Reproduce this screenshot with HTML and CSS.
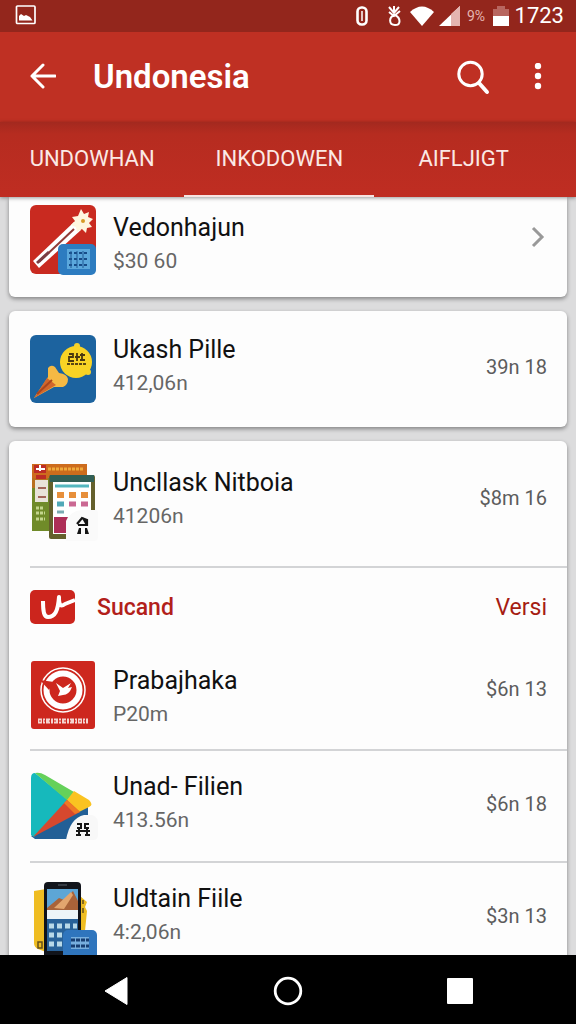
FILE: index.html
```html
<!DOCTYPE html>
<html lang="id">
<head>
  <meta charset="UTF-8" />
  <meta name="viewport" content="width=device-width, initial-scale=1" />
  <title>Undonesia</title>
  <link rel="stylesheet" href="styles.css">
</head>
<body>
  <!-- Status bar -->
  <div class="statusbar">
    <svg width="22" height="20" viewBox="0 0 22 20">
      <rect x="1.5" y="1" width="18.5" height="17.5" rx="1" fill="none" stroke="#fff" stroke-width="1.7"/>
      <path d="M4 15.5V11l2-2 3 2 2-1 4 2 2.5 3.500z" fill="#fff"/>
    </svg>
    <div class="status-right">
      <svg width="160" height="26" viewBox="0 0 160 26">
        <rect x="2.500" y="5.500" width="9" height="17" rx="4" fill="none" stroke="#fff" stroke-width="2.600"/>
        <path d="M7 9v10" stroke="#fff" stroke-width="1.500"/>
        <path d="M34 5l5 6 5-6M34 10l5 4 6-5M39 4v9M40 13c-7 2-6 10 0 10s6-7 0-10" fill="none" stroke="#fff" stroke-width="2"/>
        <path d="M55 10Q67-1 79 10L67 24z" fill="#fff"/>
        <path d="M84 24L105 4v20z" fill="#fff"/>
        <path d="M96 12l9-8v20h-9z" fill="#e4b5b0"/>
        <text x="112" y="19" class="percent">9%</text>
        <path d="M138 7h4V4h8v3h4v7h-16z" fill="#b8665f"/>
        <path d="M138 14h16v10h-16z" fill="#fff"/>
      </svg>
      <span class="clock">1723</span>
    </div>
  </div>

  <header class="appbar">
    <button class="icon-btn back" aria-label="Back">
      <svg width="28" height="28" viewBox="0 0 28 28" fill="none" stroke="#fff" stroke-width="3" stroke-linecap="round" stroke-linejoin="round">
        <path d="M27 13H4M15 2L4 13l11 11"/>
      </svg>
    </button>
    <h1>Undonesia</h1>
    <button class="icon-btn" aria-label="Search">
      <svg width="34" height="36" viewBox="0 0 34 36" fill="none" stroke="#fff" stroke-linecap="round">
        <circle cx="14.500" cy="15" r="11.700" stroke-width="3"/>
        <path d="M23 24l8 9" stroke-width="4"/>
      </svg>
    </button>
    <button class="icon-btn more" aria-label="More options">
      <svg width="8" height="28" viewBox="0 0 8 28" fill="#fff">
        <circle cx="4" cy="3" r="3.200"/><circle cx="4" cy="13" r="3.200"/><circle cx="4" cy="23" r="3.200"/>
      </svg>
    </button>
  </header>

  <nav class="tabs">
    <a href="#undowhan">UNDOWHAN</a>
    <a href="#inkodowen" class="active">INKODOWEN</a>
    <a href="#aifljigt">AIFLJIGT</a>
  </nav>

  <main>
    <section class="card first">
      <div class="row">
        <svg width="68" height="70" viewBox="0 0 68 70">
          <rect y="0" width="66" height="69" rx="6" fill="#c92a20"/>
          <path d="M3 56L44 17l7 8L9 63z" fill="#fff"/>
          <path d="M9 57L44 24" stroke="#923b37" stroke-width="2"/>
          <path d="M7 58l12-11" stroke="#7a3d43" stroke-width="3"/>
          <path d="M51 4l3 5 5-2-1 5 5 2-4 4 3 4-5 1-1 5-4-4-5 3-1-5-5-2 4-4-3-4 6-1z" fill="#fff6df"/>
          <circle cx="53" cy="16" r="2" fill="#d79b27"/>
          <rect x="28" y="39" width="38" height="31" rx="5" fill="#2d7cc0"/>
          <rect x="37" y="44" width="23" height="20" fill="#5ba8dc"/>
          <path d="M39 48h19M39 54h19M39 60h19" stroke="#174c88" stroke-width="2" stroke-dasharray="3 2"/>
          <path d="M41 46v17M47 46v17M53 46v17" stroke="#205a96"/>
        </svg>
        <div class="info">
          <h2>Vedonhajun</h2>
          <p>$30 60</p>
        </div>
        <svg class="chevron" width="14" height="22" viewBox="0 0 14 22" fill="none" stroke="#999" stroke-width="3">
          <path d="M2 2l9 9-9 9"/>
        </svg>
      </div>
    </section>

    <section class="card second">
      <div class="row">
        <svg width="68" height="68" viewBox="0 0 68 68">
          <rect width="66" height="68" rx="6" fill="#1c639f"/>
          <path d="M4 63l14-21 0-9q3-4 7-1l4 6q8 1 9 6 0 6-5 8l-9 0z" fill="#f5b944"/>
          <path d="M4 63l13-20 9 7z" fill="#d2662c"/>
          <path d="M7 59l15-14" stroke="#a9451e" stroke-width="2"/>
          <circle cx="47" cy="11" r="3" fill="#f5d22b"/><circle cx="58" cy="37" r="3" fill="#f5d22b"/>
          <circle cx="46" cy="27" r="16" fill="#f8d325"/>
          <path d="M39 19h4v3h-4v4h5M47 18v8M45 22h5M52 18v8M50 20h5M50 25h5" fill="none" stroke="#493810" stroke-width="1.800"/>
          <path d="M37 29h20" stroke="#594613" stroke-width="2" stroke-dasharray="3 1"/>
        </svg>
        <div class="info">
          <h2>Ukash Pille</h2>
          <p>412,06n</p>
        </div>
        <span class="amount">39n 18</span>
      </div>
    </section>

    <section class="card third">
      <div class="row tall">
        <svg width="68" height="78" viewBox="0 0 68 78">
          <path d="M2 1h55v67H2z" fill="#708b29"/>
          <path d="M2 1h55v14H2z" fill="#cd6c1d"/>
          <path d="M2 15h16v10H2z" fill="#b9701f"/>
          <path d="M4 2h12v8H4zM6 12h10v4H6z" fill="#bd2c25"/>
          <path d="M6 6h9M10 2v6" stroke="#fff" stroke-width="2"/>
          <path d="M18 6h35" stroke="#efaa3b" stroke-width="3" stroke-dasharray="3 1"/>
          <path d="M5 17h13v22H5z" fill="#e8e3d9"/>
          <path d="M8 25h8M8 34h8" stroke="#a16458" stroke-width="2"/>
          <path d="M6 45h8M6 50h9M6 56h9" stroke="#c4d68d" stroke-width="3" stroke-dasharray="3 1"/>
          <rect x="19" y="12" width="46" height="64" rx="2" fill="#64602c"/>
          <path d="M20 12h44v7H20z" fill="#315f56"/>
          <path d="M23 19h38v52H23z" fill="#fff"/>
          <path d="M25 23h34" stroke="#54b7c0" stroke-width="3"/>
          <path d="M27 32h7M39 32h7M51 32h7" stroke="#e78f3b" stroke-width="6"/>
          <path d="M27 41h7" stroke="#51a9b8" stroke-width="5"/>
          <path d="M39 41h7M51 41h7" stroke="#cb6993" stroke-width="5"/>
          <path d="M27 49h7" stroke="#7aabb2" stroke-width="3"/>
          <path d="M24 54h16v16H24z" fill="#ad2e57"/>
          <path d="M36 78V58q4-10 16-11h13q3 0 3 3v24q0 4-4 4z" fill="#fafafa"/>
          <path d="M47 61l5-6 5 2v5h-9M53 55l4 7" fill="none" stroke="#151515" stroke-width="2.200"/>
          <path d="M49 65l2 0v6h-4zM55 65h2l2 6h-4z" fill="#151515"/>
        </svg>
        <div class="info">
          <h2>Uncllask Nitboia</h2>
          <p>41206n</p>
        </div>
        <span class="amount">$8m 16</span>
      </div>

      <div class="section-head">
        <svg width="46" height="36" viewBox="0 0 46 36">
          <rect x="0" y="1" width="45" height="34" rx="5" fill="#cc251d"/>
          <path d="M13 12c0 11 1 16 5 16 7 0 10-6 11-20 0 9 2 10 6 7l10-4" fill="none" stroke="#fff" stroke-width="4" stroke-linejoin="round"/>
        </svg>
        <h3>Sucand</h3>
        <a href="#versi">Versi</a>
      </div>

      <div class="row short">
        <svg width="68" height="68" viewBox="0 0 68 68">
          <rect x="1" width="64" height="68" rx="3" fill="#cd271e"/>
          <circle cx="33" cy="29" r="22" fill="none" stroke="#fff" stroke-width="1.500"/>
          <circle cx="33" cy="29" r="16.500" fill="none" stroke="#fff" stroke-width="6"/>
          <path d="M10 19l14 2-5 8z" fill="#cd271e"/>
          <path d="M26 22l7 5 8-5-3 5 4-1q-3 8-9 8l-5 1 2-5z" fill="#fff"/>
          <path d="M8 60h50" stroke="#f4d4d0" stroke-width="5" stroke-dasharray="4 1 2 1"/>
          <path d="M9 60h48" stroke="#cd271e" stroke-width="1" stroke-dasharray="2 3"/>
        </svg>
        <div class="info">
          <h2>Prabajhaka</h2>
          <p>P20m</p>
        </div>
        <span class="amount">$6n 13</span>
      </div>

      <div class="row">
        <svg width="68" height="68" viewBox="0 0 68 68">
          <path d="M1 64L58 34v33H5z" fill="#225f96"/>
          <path d="M5 1Q1 1 1 6v57l3 2 34-37z" fill="#16b9bc"/>
          <path d="M5 1q5-1 10 2l29 17-6 9z" fill="#65d15a"/>
          <path d="M44 19l15 9q5 5 0 7l-10 5-12-12z" fill="#fac321"/>
          <path d="M37 28l13 12L3 65z" fill="#d6482e"/>
          <path d="M37 28l13 12-5 2-11-11z" fill="#ef7825"/>
          <path d="M36 68q4-22 18-25h8q6 2 6 8v12q0 5-5 5z" fill="#f8f8f8"/>
          <path d="M47 52h4v4h-4M59 52h-4v4h4M49 56v6M57 56v6M46 59h14M46 63h5M55 63h5" fill="none" stroke="#171717" stroke-width="2"/>
        </svg>
        <div class="info">
          <h2>Unad- Filien</h2>
          <p>413.56n</p>
        </div>
        <span class="amount">$6n 18</span>
      </div>

      <div class="row">
        <svg width="68" height="78" viewBox="0 0 68 78" class="long-icon">
          <path d="M4 9l12-2v63L8 67q-4-2-4-6z" fill="#efbd22"/>
          <path d="M50 14l7 6-2 5 2 4-2 20h-5z" fill="#efbd22"/>
          <path d="M8 60h4v6H8zM53 18v4M53 26v5" fill="none" stroke="#66501a" stroke-width="1.500"/>
          <rect x="14" y="0" width="37" height="78" rx="4" fill="#11141b"/>
          <path d="M28 3h9" stroke="#58616a"/>
          <path d="M17 7h31v21H17z" fill="#5da6d6"/>
          <path d="M17 26l12-10 5 2 9-9 5 10v9H17z" fill="#a96339"/>
          <path d="M24 26l17-16 2 3-9 14z" fill="#e2a56e"/>
          <path d="M17 28h31v9H17z" fill="#edf5f8"/>
          <path d="M17 37h31v32H17z" fill="#286299"/>
          <path d="M19 44h28M19 53h28M19 62h28" stroke="#b8d9e8" stroke-width="5" stroke-dasharray="5 3"/>
          <rect x="33" y="48" width="34" height="30" rx="5" fill="#2f75bd"/>
          <path d="M41 55h18v12H41z" fill="#76aede"/>
          <path d="M41 58h18M41 64h18" stroke="#173e72" stroke-width="3" stroke-dasharray="4 1"/>
        </svg>
        <div class="info">
          <h2>Uldtain Fiile</h2>
          <p>4:2,06n</p>
        </div>
        <span class="amount">$3n 13</span>
      </div>
    </section>
  </main>

  <!-- System buttons -->
  <footer class="navbar">
    <button class="icon-btn" aria-label="Back">
      <svg width="32" height="32" viewBox="0 0 32 32"><path d="M5 16L27 2.500v27z" fill="#fff" stroke="#fff" stroke-linejoin="round"/></svg>
    </button>
    <button class="icon-btn" aria-label="Home">
      <svg width="32" height="32" viewBox="0 0 32 32"><circle cx="16" cy="16" r="12.800" fill="none" stroke="#fff" stroke-width="2.800"/></svg>
    </button>
    <button class="icon-btn" aria-label="Recent apps">
      <svg width="32" height="32" viewBox="0 0 32 32"><rect x="3" y="3" width="26" height="26" rx="1" fill="#fff"/></svg>
    </button>
  </footer>
</body>
</html>
```
FILE: styles.css
```css
* {
  box-sizing: border-box;
}
body {
  margin: 0;
  height: 100vh;
  display: flex;
  flex-direction: column;
  overflow: hidden;
  background: #dcdcdd;
  font-family: Roboto, "Liberation Sans", sans-serif;
}
h1, h2, h3, p {
  margin: 0;
}
svg {
  display: block;
  flex-shrink: 0;
}
a {
  text-decoration: none;
}

/* Status bar */
.statusbar {
  flex: 0 0 32px;
  display: flex;
  align-items: center;
  justify-content: space-between;
  padding: 0 12px 2px 15px;
  background: #93261c;
}
.status-right {
  display: flex;
  align-items: center;
}
.percent {
  fill: #e4b5b0;
  font-size: 14px;
}
.clock {
  padding-top: 2px;
  color: #fff;
  font-size: 22px;
  line-height: 28px;
}

/* App bar */
.appbar {
  flex: 0 0 90px;
  display: flex;
  align-items: center;
  padding: 0 28px;
  background: #bf3023;
}
.appbar h1 {
  flex: 1;
  padding-left: 37px;
  color: #fff;
  font-size: 33px;
  font-weight: 600;
  line-height: 40px;
}
.icon-btn {
  border: none;
  padding: 0;
  background: none;
  cursor: pointer;
}
.more {
  margin-left: 44px;
  margin-right: 6px;
}

.tabs {
  flex: 0 0 75px;
  display: grid;
  grid-template-columns: 32% 33% 31%;
  background: linear-gradient(#a3291f, #b62c20 12px, #bf2d22);
  z-index: 1;
  box-shadow: 0 1px 4px rgba(0, 0, 0, 0.4);
}
.tabs a {
  display: flex;
  align-items: center;
  justify-content: center;
  color: #fbe9e5;
  font-size: 22px;
  border-bottom: 2px solid transparent;
}
.tabs .active {
  border-color: #f6e3e1;
}

/* Cards */
main {
  flex: 1;
  min-height: 0;
  overflow: hidden;
  padding: 0 9px;
}
.card {
  margin-bottom: 14px;
  padding-left: 21px;
  border-radius: 6px;
  background: #fdfdfd;
  box-shadow: 0 2px 4px rgba(0, 0, 0, 0.4);
}
.row {
  display: flex;
  align-items: center;
  height: 112px;
  padding-right: 20px;
}
.row + .row {
  border-top: 2px solid #d3d4d6;
}
.info {
  flex: 1;
  padding: 0 0 6px 15px;
}
.info h2 {
  color: #111;
  font-size: 25px;
  font-weight: 400;
  line-height: 34px;
}
.info p {
  color: #666;
  font-size: 21px;
  line-height: 32px;
}
.amount {
  padding-bottom: 4px;
  color: #5c5c5c;
  font-size: 20px;
}
.chevron {
  margin: 0 2px 6px 0;
}

.first {
  border-radius: 0 0 6px 6px;
}
.first .row {
  height: 100px;
  padding-bottom: 15px;
}
.first .info {
  padding-top: 8px;
  padding-bottom: 0;
}
.second .row {
  height: 116px;
}
.tall {
  height: 125px;
  padding-bottom: 4px;
}
.tall .amount {
  padding-bottom: 8px;
}
.short {
  height: 103px;
  padding-bottom: 6px;
}
.short .info {
  padding-top: 4px;
  padding-bottom: 0;
}
.short .amount {
  padding-bottom: 12px;
}
.long-icon {
  align-self: flex-start;
  margin-top: 19px;
}

.section-head {
  display: flex;
  align-items: center;
  height: 80px;
  padding-right: 20px;
  border-top: 2px solid #d3d4d6;
}
.section-head h3 {
  flex: 1;
  padding-left: 21px;
  color: #b2201a;
  font-size: 23px;
  font-weight: 500;
}
.section-head a {
  color: #a51c12;
  font-size: 23px;
}

/* System navigation */
.navbar {
  flex: 0 0 69px;
  display: flex;
  align-items: center;
  justify-content: space-between;
  padding: 2px 100px 0;
  background: #000;
  z-index: 1;
}
```
